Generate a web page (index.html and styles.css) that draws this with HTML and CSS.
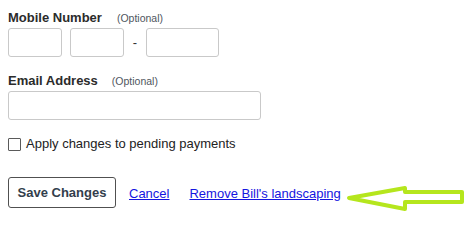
FILE: index.html
```html
<!DOCTYPE html>
<html>
<head>
<meta charset="utf-8">
<link rel="stylesheet" href="styles.css">
</head>
<body>
<div class="page">
  <div class="field">
    <div class="label">Mobile Number<span class="opt">(Optional)</span></div>
    <div class="phone-row">
      <input class="box box-short" type="text">
      <input class="box box-short" type="text">
      <span class="dash">-</span>
      <input class="box box-long" type="text">
    </div>
  </div>
  <div class="field field-email">
    <div class="label">Email Address<span class="opt">(Optional)</span></div>
    <input class="box box-email" type="text">
  </div>
  <label class="check-row">
    <input class="check" type="checkbox">
    <span>Apply changes to pending payments</span>
  </label>
  <div class="actions">
    <button class="btn">Save Changes</button>
    <a class="link link-cancel" href="#">Cancel</a>
    <a class="link link-remove" href="#">Remove Bill's landscaping</a>
  </div>
  <svg class="arrow" width="130" height="41" viewBox="0 0 130 41">
    <polygon points="9,18 65,8 65,12 122,12 122,22 65,22 65,29" fill="none" stroke="#b5e61d" stroke-width="4" stroke-linejoin="round"/>
  </svg>
</div>
</body>
</html>
```
FILE: styles.css
```css
* { box-sizing: border-box; }
html, body { margin: 0; padding: 0; background: #fff; }
body {
  font-family: "Liberation Sans", Arial, sans-serif;
  font-size: 13px;
  color: #222;
}
.page {
  position: relative;
  width: 470px;
  height: 221px;
  padding: 10px 8px 0 8px;
}
.label {
  font-weight: bold;
  font-size: 13px;
  line-height: 15px;
  height: 15px;
  color: #2b2b2b;
  margin-bottom: 3px;
}
.opt {
  font-weight: normal;
  font-size: 10.5px;
  line-height: 1;
  color: #4f5660;
  margin-left: 15px;
}
.phone-row {
  display: flex;
  align-items: center;
  gap: 8px;
}
.box {
  height: 29px;
  border: 1px solid #c9c9c9;
  border-radius: 3px;
  background: #fff;
  margin: 0;
  padding: 0 4px;
  font: inherit;
}
.box-short { width: 54px; }
.box-long { width: 73px; }
.box-email { width: 253px; display: block; }
.dash {
  width: 6px;
  text-align: center;
  color: #333;
  line-height: 15px;
}
.field-email { margin-top: 16px; }
.field-email .opt { margin-left: 14px; }
.check-row {
  display: flex;
  align-items: center;
  margin-top: 16px;
  height: 15px;
  line-height: 15px;
  color: #222;
  font-size: 13px;
}
.check {
  appearance: none;
  -webkit-appearance: none;
  width: 13px;
  height: 13px;
  margin: 1px 5px 0 0;
  border: 1px solid #5a5a5a;
  border-radius: 1px;
  background: #fff;
}
.actions {
  display: flex;
  align-items: center;
  margin-top: 26px;
}
.btn {
  height: 31px;
  width: 108px;
  padding: 0;
  border: 1px solid #505050;
  border-radius: 3px;
  background: #fff;
  font-family: "Liberation Sans", Arial, sans-serif;
  font-weight: bold;
  font-size: 13px;
  color: #333e4c;
}
.link {
  color: #1515e0;
  text-decoration: underline;
  font-size: 13px;
  line-height: 15px;
  margin-top: 2px;
}
.link-cancel { margin-left: 13px; }
.link-remove { margin-left: 20px; }
.arrow {
  position: absolute;
  left: 340px;
  top: 180px;
}
```
